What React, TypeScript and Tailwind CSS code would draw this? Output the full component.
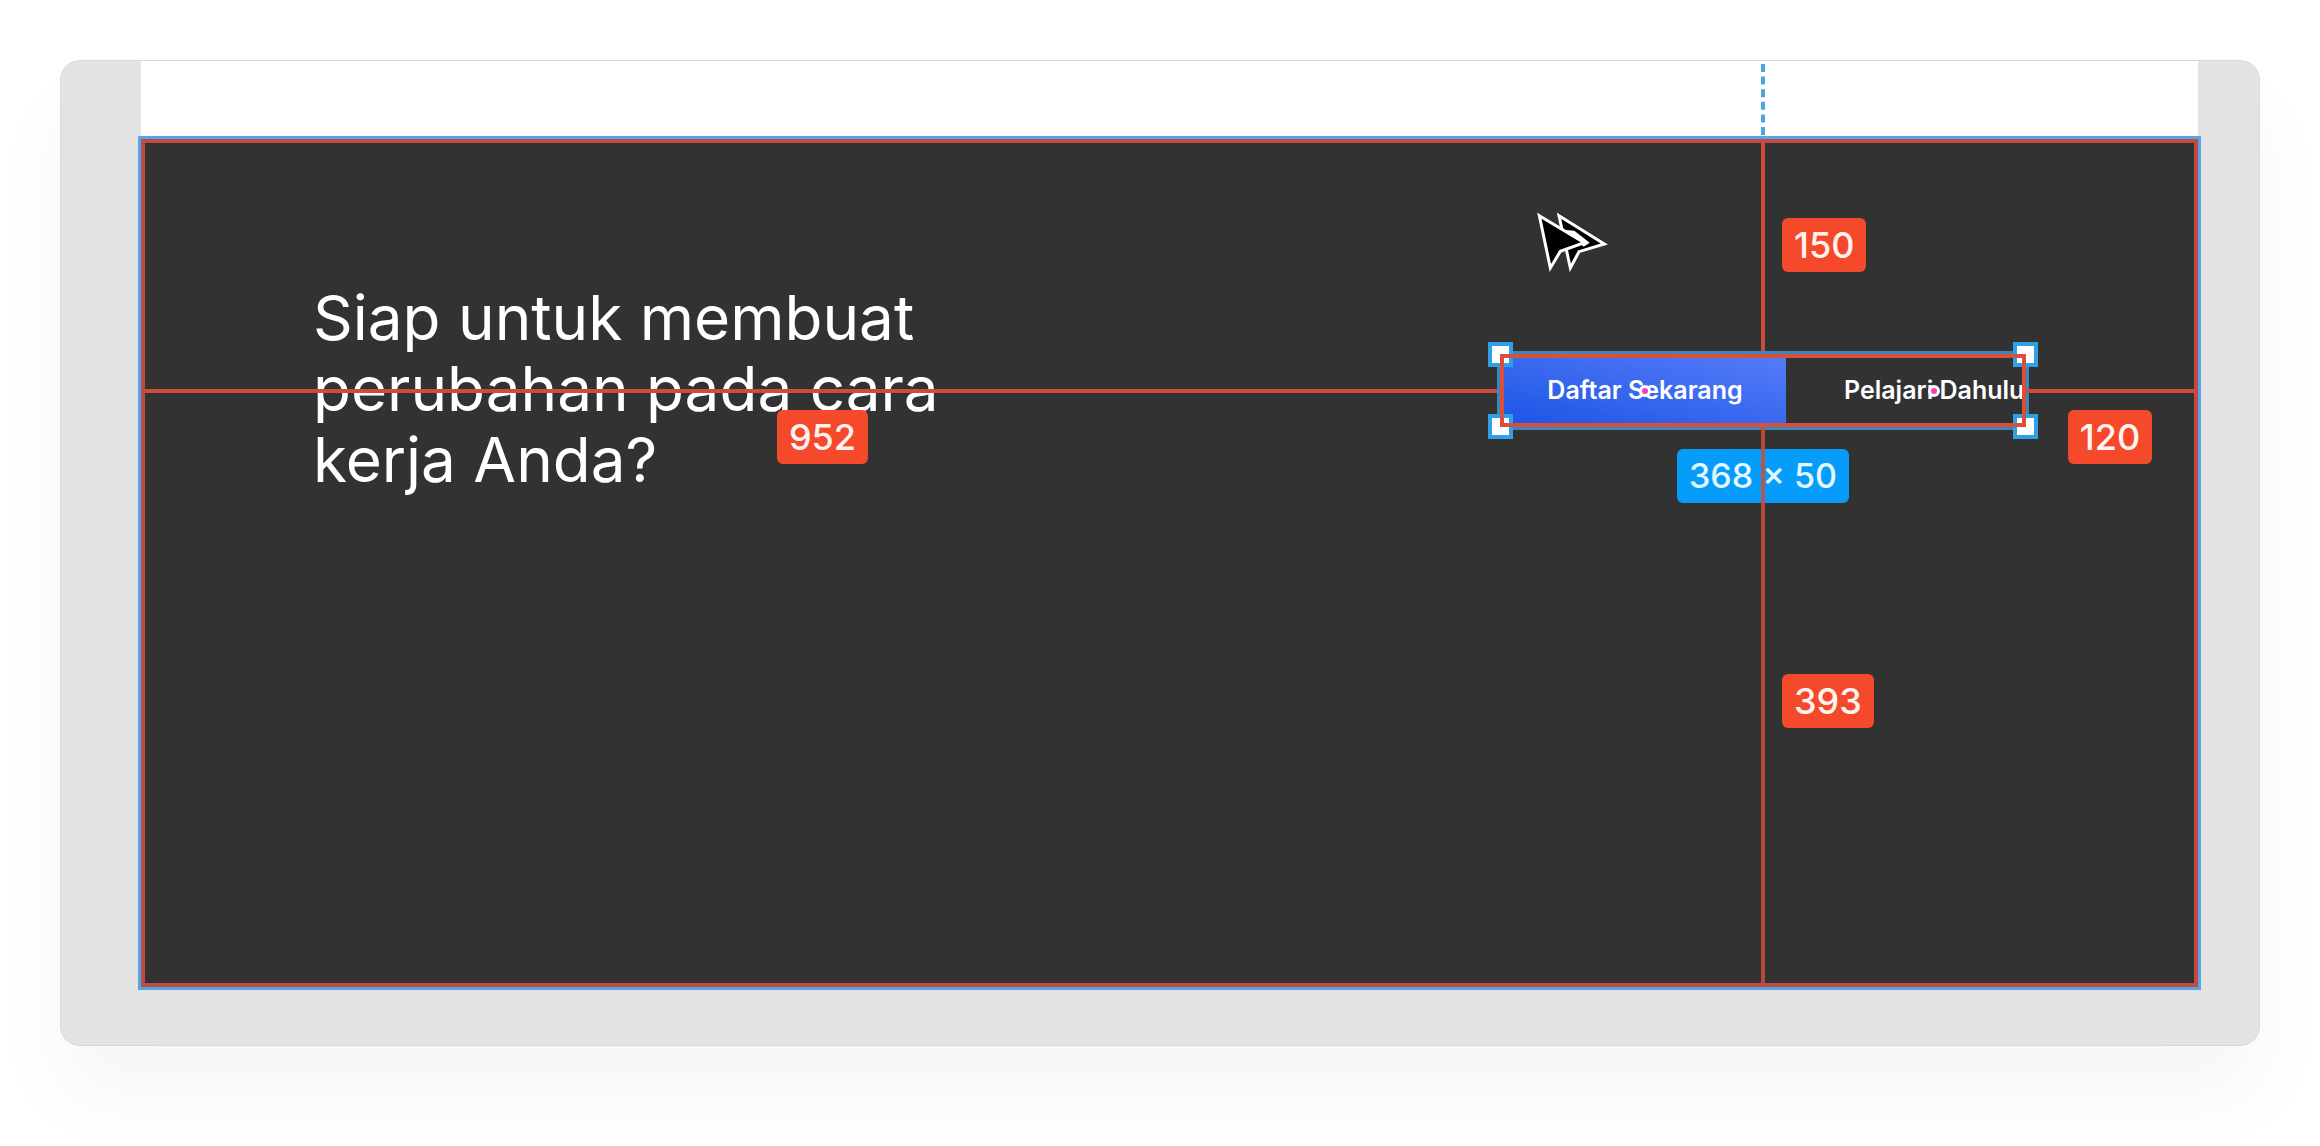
import { ReactNode } from 'react';

const Tag = ({ children }: { children: ReactNode }) => (
  <span className="inline-flex h-[54px] items-center whitespace-nowrap rounded-md bg-[#f5492c] px-3 text-[36px] leading-none font-medium text-[#fff3f0]">
    {children}
  </span>
);

const CORNERS = [
  '-top-3 -left-3',
  '-top-3 -right-3',
  '-bottom-3 -left-3',
  '-right-3 -bottom-3',
];

const Cursor = () => (
  <svg viewBox="0 0 216 186" className="h-[62px] w-[72px]" aria-hidden="true">
    <path d="M66 11 L202 96 L126 119 L100 168 Z" fill="#000" stroke="#fff" strokeWidth="9" />
    <path d="M86 54 L112 56 L158 92 L140 104 Z" fill="#fff" />
    <path d="M7 11 L142 92 L70 118 L40 168 Z" fill="#000" stroke="#fff" strokeWidth="9" />
  </svg>
);

const Selection = () => (
  <div className="relative h-[73px]">
    <div className="flex h-full items-stretch overflow-hidden p-1 text-[25px] font-semibold whitespace-nowrap text-white">
      <button className="relative w-[282px] shrink-0 bg-linear-to-tr from-[#1b55e6] to-[#547bf8]">
        Daftar Sekarang
        <span className="absolute top-1/2 left-1/2 size-3 -translate-1/2 rounded-full border-3 border-white bg-[#f43fb0]" />
      </button>
      <button className="relative shrink-0 px-[58px]">
        Pelajari Dahulu
        <span className="absolute top-1/2 left-1/2 size-3 -translate-1/2 rounded-full border-3 border-white bg-[#f43fb0]" />
      </button>
    </div>

    {/* Handles */}
    <div className="pointer-events-none absolute -inset-[3px] border-[3px] border-[#3d86bd]" />
    {CORNERS.map((corner) => (
      <span key={corner} className={`absolute size-[25px] border-4 border-[#2f9fe8] bg-white ${corner}`} />
    ))}
    <div className="pointer-events-none absolute inset-0 border-4 border-[#d94f3c]" />
  </div>
);

const Measurements = () => (
  <div className="absolute inset-0 grid grid-cols-[1fr_526px_168px] grid-rows-[211px_73px_1fr]">
    {/* Top distance */}
    <div className="relative col-start-2 row-start-1 flex items-center">
      <div className="absolute top-[69px] left-[37px]">
        <Cursor />
      </div>
      <div className="mx-auto h-full w-1 bg-[#cf4c38]" />
      <div className="absolute left-1/2 mb-2 ml-[19px]">
        <Tag>150</Tag>
      </div>
    </div>

    {/* Left distance */}
    <div className="relative col-start-1 row-start-2 flex items-center justify-center">
      <div className="h-1 w-full bg-[#cf4c38]" />
      <div className="absolute top-14">
        <Tag>952</Tag>
      </div>
    </div>

    <div className="col-start-2 row-start-2">
      <Selection />
    </div>

    {/* Right distance */}
    <div className="relative col-start-3 row-start-2 flex items-center justify-center">
      <div className="h-1 w-full bg-[#cf4c38]" />
      <div className="absolute top-14">
        <Tag>120</Tag>
      </div>
    </div>

    {/* Bottom distance and size */}
    <div className="relative col-start-2 row-start-3 flex items-center justify-center">
      <span className="absolute top-[22px] flex h-[54px] items-center whitespace-nowrap rounded-md bg-[#069cfa] px-3 text-[34px] leading-none font-medium text-[#e3f7ff]">
        368 × 50
      </span>
      <div className="z-10 h-full w-1 bg-[#cf4c38]/85" />
      <div className="absolute left-1/2 mb-2 ml-[19px]">
        <Tag>393</Tag>
      </div>
    </div>
  </div>
);

const App = () => {
  return (
    <main className="flex min-h-screen bg-white px-[60px] pt-[60px] pb-[100px] font-['Inter',sans-serif]">
      <div className="flex flex-1 flex-col overflow-hidden rounded-[20px] border border-[#d9d9d9] bg-[#e3e3e3] pr-[58px] pb-[55px] pl-[77px] shadow-[0_50px_80px_rgba(0,0,0,0.04)]">
        {/* Section above, with the alignment guide */}
        <div className="mx-[3px] grid h-[75px] grid-cols-[1fr_526px_168px] bg-white px-1">
          <div className="col-start-2 flex justify-center">
            <svg className="h-full w-1" aria-hidden="true">
              <line x1="2" y1="3" x2="2" y2="75" stroke="#4aa8e0" strokeWidth="4" strokeDasharray="8 4.6" />
            </svg>
          </div>
        </div>

        <section className="flex flex-1 border-[3px] border-[#56a5e6]">
          <div className="relative flex-1 border-4 border-[#bf4b41] bg-[#323232] px-[168px] pt-[139px]">
            <h1 className="w-[700px] text-[62px] leading-[71px] font-normal text-white">
              Siap untuk membuat perubahan pada cara kerja Anda?
            </h1>
            <Measurements />
          </div>
        </section>
      </div>
    </main>
  );
};

export default App;
